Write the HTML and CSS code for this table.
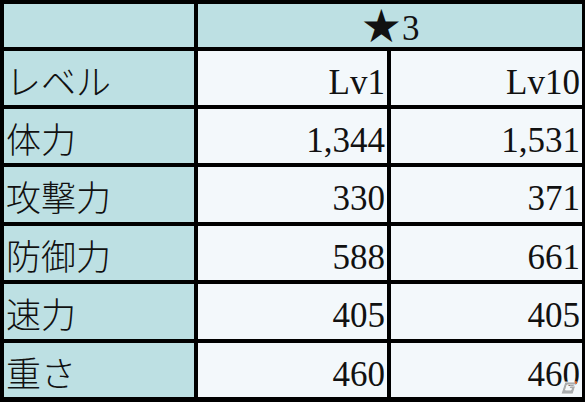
FILE: index.html
```html
<!DOCTYPE html>
<html lang="ja">
<head>
<meta charset="utf-8">
<link rel="stylesheet" href="styles.css">
</head>
<body>
<div class="wrap">
  <div class="table">
    <div class="cell label"></div>
    <div class="cell head"><span class="star">★</span><span class="num">3</span></div>

    <div class="cell label">レベル</div>
    <div class="cell val">Lv1</div>
    <div class="cell val">Lv10</div>

    <div class="cell label">体力</div>
    <div class="cell val">1,344</div>
    <div class="cell val">1,531</div>

    <div class="cell label">攻撃力</div>
    <div class="cell val">330</div>
    <div class="cell val">371</div>

    <div class="cell label">防御力</div>
    <div class="cell val">588</div>
    <div class="cell val">661</div>

    <div class="cell label">速力</div>
    <div class="cell val">405</div>
    <div class="cell val">405</div>

    <div class="cell label">重さ</div>
    <div class="cell val">460</div>
    <div class="cell val">460</div>
  </div>
  <svg class="mark" width="18" height="14" viewBox="0 0 18 14">
    <path d="M5 1 H16 L15 4 H7 L5.5 9 H11 L11.5 7.5 H9 L10 5 H15.5 L13 13 H1 Z" fill="#a9acae" stroke="#ffffff" stroke-width="0.8"/>
    <circle cx="16" cy="1.6" r="1.3" fill="#e0662a"/>
  </svg>
</div>
</body>
</html>
```
FILE: styles.css
```css
html, body {
  margin: 0;
  padding: 0;
  overflow: hidden;
  background: #ffffff;
}

.wrap {
  position: relative;
  width: 585px;
  height: 402px;
}

.table {
  display: grid;
  grid-template-columns: 190px 189px 191px;
  grid-template-rows: 43px 54px 54px 55px 54px 55px 54px;
  gap: 4px;
  padding: 4px 3px 5px 4px;
  background: #000000;
  width: max-content;
}

.cell {
  display: flex;
  align-items: center;
  box-sizing: border-box;
  color: #111111;
}

.label {
  background: #bde0e3;
  font-family: "Noto Sans CJK JP", sans-serif;
  font-weight: 300;
  font-size: 35px;
  padding-left: 2px;
  padding-top: 2px;
  line-height: 1;
}

.head {
  grid-column: span 2;
  background: #bde0e3;
  justify-content: center;
  align-items: center;
  line-height: 1;
}

.star {
  font-family: "DejaVu Sans", sans-serif;
  font-size: 46px;
  line-height: 36px;
  margin-top: 1px;
}

.num {
  font-family: "Liberation Serif", serif;
  font-size: 35px;
  line-height: 36px;
  margin-top: 6px;
}

.val {
  background: #f3f8fb;
  justify-content: flex-end;
  font-family: "Liberation Serif", serif;
  font-size: 35px;
  padding-right: 2px;
  padding-top: 8px;
  line-height: 1;
}

.mark {
  position: absolute;
  left: 560px;
  top: 381px;
}
```
